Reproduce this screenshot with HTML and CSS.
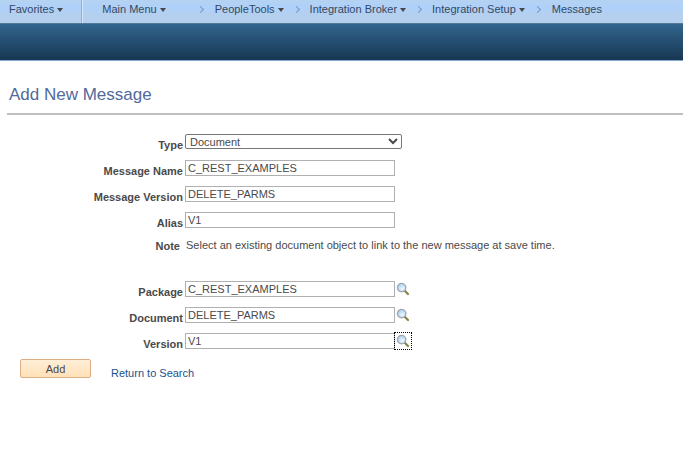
FILE: index.html
```html
<!DOCTYPE html>
<html lang="en">
<head>
    <meta charset="UTF-8">
    <title>Add New Message</title>
    <link rel="stylesheet" href="styles.css">
</head>
<body>
    <svg class="defs" width="0" height="0" aria-hidden="true">
        <defs>
            <radialGradient id="glass" cx="0.6" cy="0.65" r="0.7">
                <stop offset="0" stop-color="#f0f9ff"/>
                <stop offset="1" stop-color="#a5cdf0"/>
            </radialGradient>
            <symbol id="lookup" viewBox="0 0 14 14">
                <path d="M8.5 8.5 L12 12" stroke="#858548" stroke-width="2.2" stroke-linecap="round"/>
                <circle cx="5.6" cy="5.6" r="4.2" fill="url(#glass)" stroke="#a3aab5" stroke-width="1.4"/>
            </symbol>
        </defs>
    </svg>

    <nav class="breadcrumb">
        <button type="button" class="crumb favorites">Favorites</button>
        <button type="button" class="crumb main-menu">Main Menu</button>
        <span class="sep first"></span>
        <button type="button" class="crumb">PeopleTools</button>
        <span class="sep"></span>
        <button type="button" class="crumb">Integration Broker</button>
        <span class="sep"></span>
        <button type="button" class="crumb">Integration Setup</button>
        <span class="sep"></span>
        <a href="#" class="crumb-link">Messages</a>
    </nav>
    <div class="banner"></div>

    <main>
        <h1>Add New Message</h1>

        <form>
            <div class="fields">
                <div class="row">
                    <label for="type">Type</label>
                    <select id="type">
                        <option>Document</option>
                    </select>
                </div>
                <div class="row">
                    <label for="message-name">Message Name</label>
                    <input type="text" id="message-name" value="C_REST_EXAMPLES">
                </div>
                <div class="row">
                    <label for="message-version">Message Version</label>
                    <input type="text" id="message-version" value="DELETE_PARMS">
                </div>
                <div class="row">
                    <label for="alias">Alias</label>
                    <input type="text" id="alias" value="V1">
                </div>
                <div class="row note">
                    <strong>Note</strong>
                    <span>Select an existing document object to link to the new message at save time.</span>
                </div>
            </div>

            <div class="fields">
                <div class="row">
                    <label for="package">Package</label>
                    <input type="text" id="package" value="C_REST_EXAMPLES">
                    <button type="button" class="lookup" aria-label="Look up Package"><svg><use href="#lookup"/></svg></button>
                </div>
                <div class="row">
                    <label for="document">Document</label>
                    <input type="text" id="document" value="DELETE_PARMS">
                    <button type="button" class="lookup" aria-label="Look up Document"><svg><use href="#lookup"/></svg></button>
                </div>
                <div class="row">
                    <label for="version">Version</label>
                    <input type="text" id="version" value="V1">
                    <button type="button" class="lookup focused" aria-label="Look up Version"><svg><use href="#lookup"/></svg></button>
                </div>
            </div>

            <div class="actions">
                <button type="submit" class="add">Add</button>
                <a href="#">Return to Search</a>
            </div>
        </form>
    </main>
</body>
</html>
```
FILE: styles.css
```css
* {
    box-sizing: border-box;
}

body {
    margin: 0;
    background: #fff;
    color: #4a4a4a;
    font-family: Arial, "Liberation Sans", sans-serif;
    font-size: 11px;
    line-height: 14px;
}

button,
input,
select {
    font: inherit;
    color: inherit;
}

.defs {
    position: absolute;
}

/* breadcrumb bar */
.breadcrumb {
    display: flex;
    height: 23px;
    padding-left: 9px;
    background: linear-gradient(#b4d2f1, #aed0fa 35%, #b5d0ee 65%, #b5d0ee);
    color: #34485f;
    white-space: nowrap;
}

.crumb,
.crumb-link {
    display: flex;
    align-items: center;
    padding: 0 0 5px;
    border: 0;
    background: none;
    color: inherit;
    text-decoration: none;
}

.crumb::after {
    content: "";
    margin: 1px 0 0 3px;
    border: 3px solid transparent;
    border-top: 4px solid #484848;
    border-bottom: 0;
}

.favorites {
    padding-right: 18px;
    border-right: 1px solid #8fb2dc;
    box-shadow: 1px 0 #d3e5f8;
}

.main-menu {
    margin-left: 20px;
}

.sep {
    display: flex;
    align-items: center;
    width: 26px;
    padding: 0 0 5px 10px;
}

.sep.first {
    width: 49px;
    padding-left: 32px;
}

.sep::before {
    content: "";
    width: 4px;
    height: 4px;
    border: solid #7797bc;
    border-width: 1px 1px 0 0;
    transform: rotate(45deg);
}

.crumb-link {
    margin-left: 1px;
}

.banner {
    height: 38px;
    background: linear-gradient(#32658e, #173752);
    border-top: 1px solid #54799a;
    border-bottom: 1px solid #83a9cf;
}

/* page content */
main {
    padding: 24px 0 20px 7px;
}

h1 {
    margin: 0 0 19px;
    padding: 0 2px 8px;
    border-bottom: 2px solid #c0c0c0;
    color: #51699b;
    font-size: 17px;
    font-weight: normal;
    line-height: 20px;
}

.row {
    display: flex;
    align-items: flex-start;
    height: 26px;
}

.row label,
.row strong {
    width: 176px;
    margin-right: 2px;
    padding-top: 4px;
    text-align: right;
    font-weight: bold;
}

.row input {
    width: 210px;
    height: 16px;
    padding: 0 2px;
    border: 1px solid #b0b0b0;
    background: #fff;
}

.row select {
    width: 217px;
    height: 15px;
    padding: 0;
    border: 1px solid #767676;
    border-radius: 2px;
    background: #fff;
}

.row.note {
    height: 43px;
}

.row.note strong {
    width: 173px;
    margin-right: 6px;
    padding-top: 1px;
}

.lookup {
    display: flex;
    width: 16px;
    height: 16px;
    padding: 1px;
    border: 0;
    background: none;
}

.lookup svg {
    width: 14px;
    height: 14px;
}

.lookup.focused {
    outline: 1px dotted #000;
}

.actions {
    display: flex;
    align-items: flex-start;
    padding-left: 13px;
}

.add {
    width: 71px;
    height: 19px;
    margin-right: 20px;
    padding: 0;
    border: 1px solid #deae83;
    border-radius: 2px;
    background: linear-gradient(#ffeed8, #ffe1b8);
}

.actions a {
    padding-top: 7px;
    color: #1b5290;
    text-decoration: none;
}
```
